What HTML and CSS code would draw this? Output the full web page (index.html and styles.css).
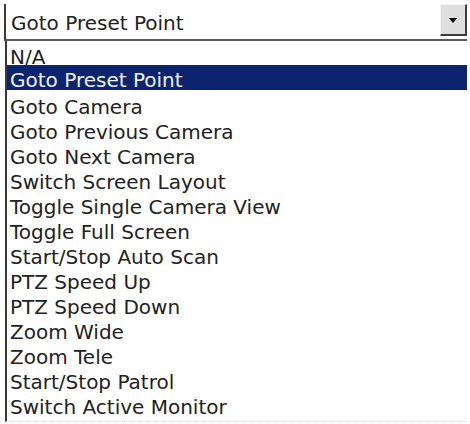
FILE: index.html
```html
<!DOCTYPE html>
<html>
<head>
<meta charset="utf-8">
<link rel="stylesheet" href="styles.css">
</head>
<body>
<div class="combo">
  <div class="combo-value">Goto Preset Point</div>
  <div class="combo-button"><span class="arrow"></span></div>
</div>
<ul class="list">
  <li class="item first">N/A</li>
  <li class="item selected">Goto Preset Point</li>
  <li class="item">Goto Camera</li>
  <li class="item">Goto Previous Camera</li>
  <li class="item">Goto Next Camera</li>
  <li class="item">Switch Screen Layout</li>
  <li class="item">Toggle Single Camera View</li>
  <li class="item">Toggle Full Screen</li>
  <li class="item">Start/Stop Auto Scan</li>
  <li class="item">PTZ Speed Up</li>
  <li class="item">PTZ Speed Down</li>
  <li class="item">Zoom Wide</li>
  <li class="item">Zoom Tele</li>
  <li class="item">Start/Stop Patrol</li>
  <li class="item">Switch Active Monitor</li>
</ul>
</body>
</html>
```

FILE: styles.css
```css
html, body {
  margin: 0;
  padding: 0;
  background: #ffffff;
}
body {
  width: 470px;
  height: 424px;
  overflow: hidden;
  font-family: "DejaVu Sans", Verdana, sans-serif;
  font-size: 20px;
  color: #222222;
}
.combo {
  display: flex;
  align-items: flex-start;
  margin: 4px 3px 0 4px;
  height: 35px;
  border-left: 2px solid #3a3a3a;
  border-bottom: 2px solid #5a5a5a;
}
.combo-value {
  flex: 1;
  padding: 8px 0 0 5px;
  line-height: 22px;
}
.combo-button {
  width: 27px;
  height: 32px;
  box-sizing: border-box;
  background: #dedede;
  border-top: 1px solid #f6f6f6;
  border-left: 1px solid #f6f6f6;
  border-right: 2px solid #3c3c3c;
  border-bottom: 2px solid #3c3c3c;
  display: flex;
  align-items: center;
  justify-content: center;
}
.arrow {
  width: 0;
  height: 0;
  border-left: 4px solid transparent;
  border-right: 4px solid transparent;
  border-top: 5px solid #000;
  margin-top: 2px;
}
.list {
  list-style: none;
  margin: 0 3px 0 5px;
  padding: 0 0 6px 0;
  border-left: 2px solid #3a3a3a;
  border-bottom: 1px dotted #dcdcdc;
}
.item {
  height: 25px;
  box-sizing: border-box;
  padding: 7px 0 0 3px;
  line-height: 20px;
  white-space: nowrap;
}
.item.first {
  height: 24px;
  padding-top: 6px;
}
.item.selected {
  background: #0c2470;
  color: #eef2ff;
  padding-top: 5px;
}
```
